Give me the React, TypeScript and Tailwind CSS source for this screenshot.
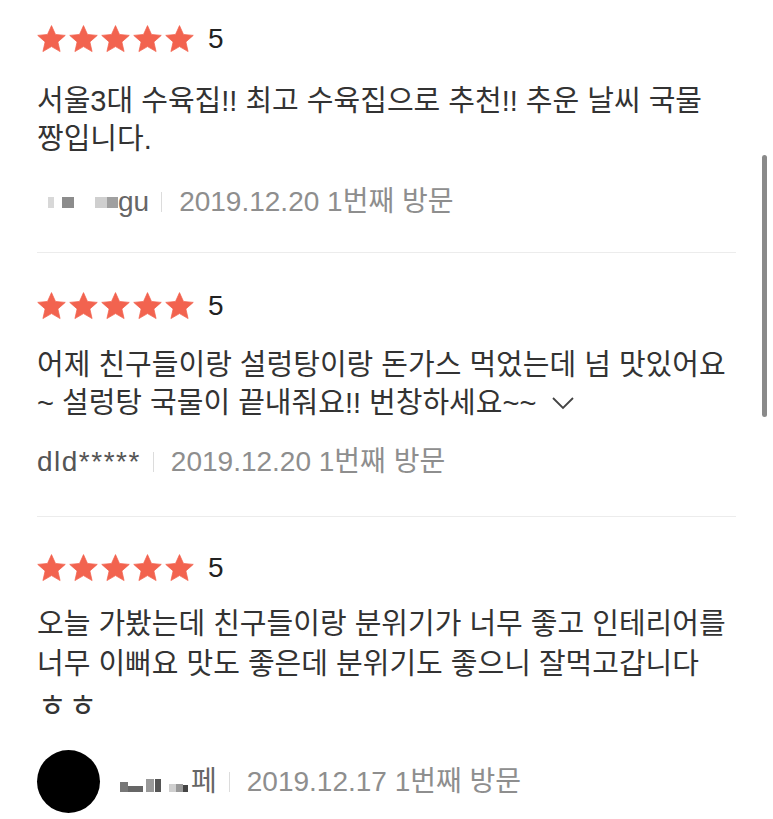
import React from "react";

const FONT = { fontFamily: '"Liberation Sans", "Noto Sans CJK KR", sans-serif' };

function Star() {
  return (
    <svg width="29" height="28" viewBox="0 0 24 23" className="block">
      <path
        d="M12 0.4l3.3 7.3 8.1 0.8-6.1 5.4 1.8 8L12 17.8l-7.1 4.1 1.8-8L0.6 8.5l8.1-0.8z"
        fill="#f2634f"
        stroke="#f2634f"
        strokeWidth="0.6"
        strokeLinejoin="round"
      />
    </svg>
  );
}

function Stars() {
  return (
    <div className="flex items-center h-[30px]">
      <div className="flex gap-[3px]">
        <Star />
        <Star />
        <Star />
        <Star />
        <Star />
      </div>
      <span className="ml-[14px] text-[28px] leading-[30px] text-[#222]">5</span>
    </div>
  );
}

function Sep() {
  return <span className="inline-block w-px h-[20px] bg-[#dcdcdc] ml-[12px] mr-[17px]" />;
}

function Meta({ name, date }: { name: React.ReactNode; date: string }) {
  return (
    <div className="flex items-center h-[30px] text-[28px] leading-[30px] whitespace-nowrap">
      <span className="flex items-center text-[#666]">{name}</span>
      <Sep />
      <span className="text-[#8e8e8e]">{date} 1번째 방문</span>
    </div>
  );
}

function Blk({ w, h, c, ml = 0 }: { w: number; h: number; c: string; ml?: number }) {
  return (
    <span
      className="inline-block"
      style={{ width: w, height: h, background: c, marginLeft: ml }}
    />
  );
}

export default function App() {
  return (
    <div className="relative w-[773px] h-[819px] bg-white overflow-hidden" style={FONT}>
      <div className="px-[37px]">
        {/* Review 1 */}
        <div className="pt-[24px] pb-[35px] border-b border-[#ececec]">
          <Stars />
          <div className="mt-[28px] text-[29px] leading-[38px] text-[#333] whitespace-nowrap">
            서울3대 수육집!! 최고 수육집으로 추천!! 추운 날씨 국물
            <br />
            짱입니다.
          </div>
          <div className="mt-[29px]">
            <Meta
              name={
                <>
                  <span className="inline-flex items-center ml-[11px]">
                    <Blk w={6} h={11} c="#d8d8d8" />
                    <Blk w={12} h={11} c="#8c8c8c" ml={8} />
                    <Blk w={12} h={11} c="#cfcfcf" ml={21} />
                    <Blk w={11} h={11} c="#a0a0a0" />
                  </span>
                  <span>gu</span>
                </>
              }
              date="2019.12.20"
            />
          </div>
        </div>

        {/* Review 2 */}
        <div className="pt-[38px] pb-[39px] border-b border-[#ececec]">
          <Stars />
          <div className="mt-[25px] text-[29px] leading-[38px] text-[#333] whitespace-nowrap">
            어제 친구들이랑 설렁탕이랑 돈가스 먹었는데 넘 맛있어요
            <br />
            <span className="inline-flex items-center">
              ~ 설렁탕 국물이 끝내줘요!! 번창하세요~~
              <svg width="24" height="14" viewBox="0 0 24 14" className="ml-[15px]">
                <path d="M2 2l10 10 10-10" fill="none" stroke="#444" strokeWidth="1.8" />
              </svg>
            </span>
          </div>
          <div className="mt-[25px]">
            <Meta
              name={<span className="text-[#555] tracking-[1.5px]">dld*****</span>}
              date="2019.12.20"
            />
          </div>
        </div>

        {/* Review 3 */}
        <div className="pt-[36px]">
          <Stars />
          <div className="mt-[21px] text-[29px] leading-[40px] text-[#333] whitespace-nowrap">
            오늘 가봤는데 친구들이랑 분위기가 너무 좋고 인테리어를
            <br />
            너무 이뻐요 맛도 좋은데 분위기도 좋으니 잘먹고갑니다
            <br />
            <span className="inline-block pl-[1px] translate-y-[2px] text-[31px] tracking-[2px]">ㅎㅎ</span>
          </div>
          <div className="mt-[26px] flex items-center">
            <div className="w-[63px] h-[63px] rounded-full bg-black" />
            <div className="ml-[20px]">
              <Meta
                name={
                  <>
                    <span className="inline-flex items-end h-[20px]">
                      <Blk w={8} h={10} c="#777" />
                      <Blk w={15} h={6} c="#666" />
                      <Blk w={8} h={13} c="#999" ml={3} />
                      <Blk w={6} h={13} c="#555" ml={1} />
                      <Blk w={7} h={8} c="#cfcfcf" ml={8} />
                      <Blk w={7} h={8} c="#999" />
                      <Blk w={5} h={7} c="#444" ml={0} />
                    </span>
                    <span className="ml-[3px]">페</span>
                  </>
                }
                date="2019.12.17"
              />
            </div>
          </div>
        </div>
      </div>

      {/* scrollbar overlay */}
      <div className="absolute left-[762px] top-[155px] w-[5px] h-[262px] rounded-full bg-[#8a8a8a]" />
    </div>
  );
}
